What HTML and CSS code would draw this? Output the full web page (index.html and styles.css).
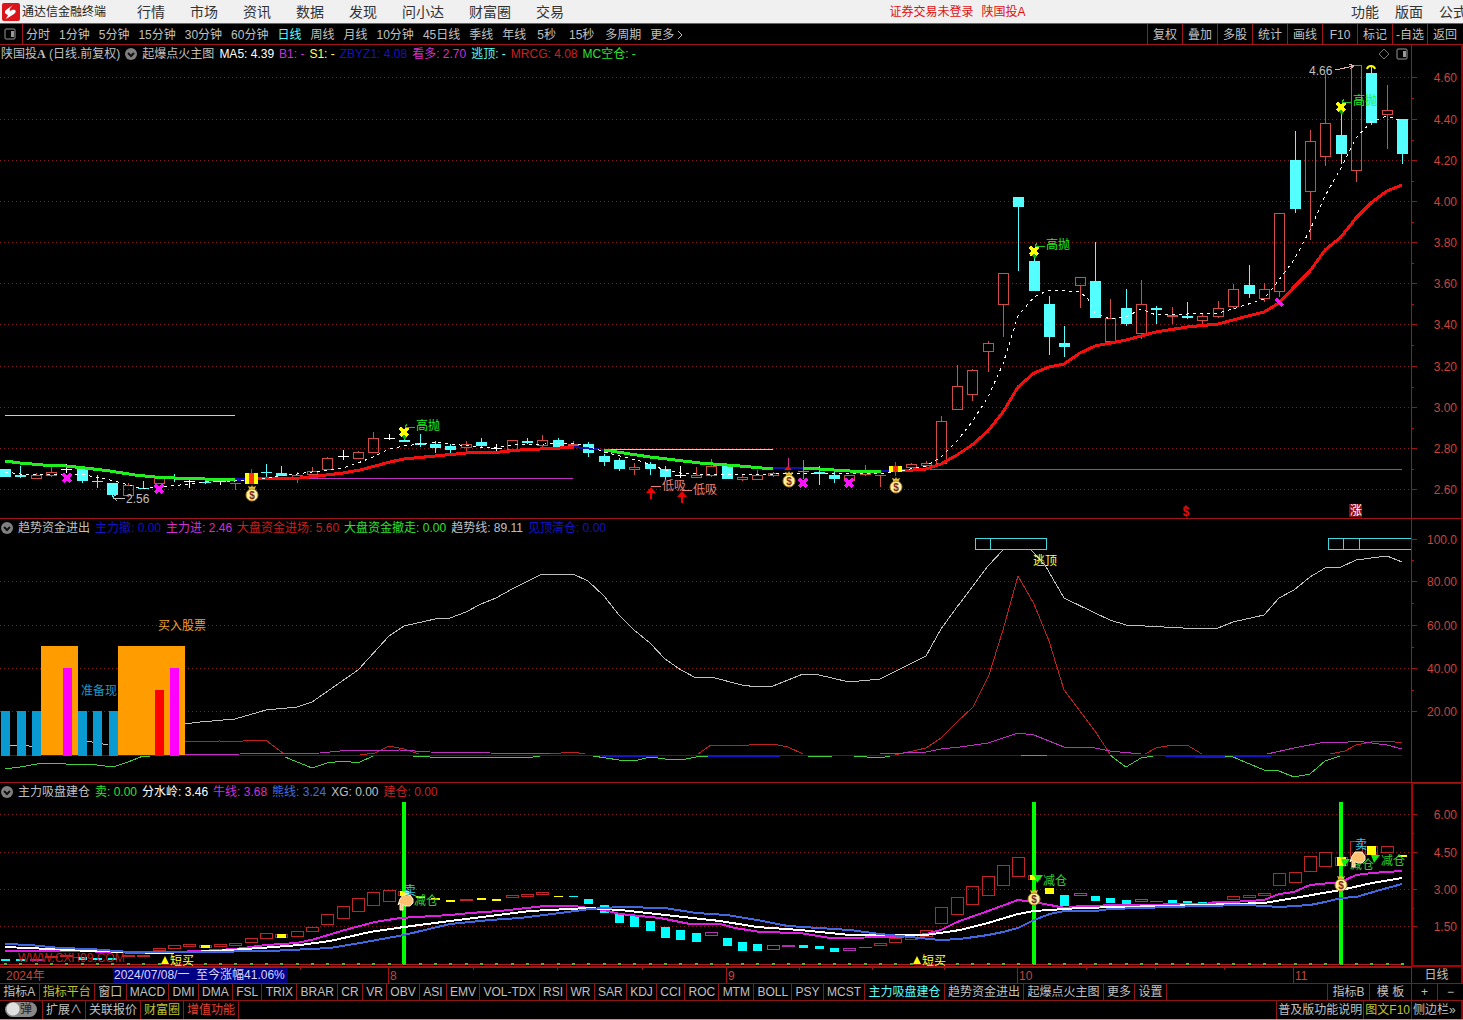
FILE: index.html
```html
<!DOCTYPE html>
<html lang="zh-CN">
<head>
<meta charset="utf-8">
<title>通达信金融终端</title>
<link rel="stylesheet" href="styles.css">
</head>
<body>
<header class="menubar">
  <svg class="logo" viewBox="0 0 18 18"><rect width="18" height="18" rx="2" fill="#d9151b"/><path d="M11 2 4 7c-2 2-1 4 2 5l-2 4 8-5c3-2 2-5-2-4L8 8c-1-1 0-3 3-6z" fill="#fff"/></svg>
  <span class="brand">通达信金融终端</span>
  <nav class="menus">
    <button>行情</button><button>市场</button><button>资讯</button><button>数据</button><button>发现</button><button>问小达</button><button>财富圈</button><button>交易</button>
  </nav>
  <p class="status"><span>证券交易未登录</span><span>陕国投A</span></p>
  <nav class="menus right"><button>功能</button><button>版面</button><button>公式</button></nav>
</header>

<div class="toolbar">
  <button class="pane" aria-label="侧栏"><svg viewBox="0 0 12 12" width="12" height="12"><rect x="1" y="1" width="10" height="10" rx="1" fill="none" stroke="#999"/><rect x="7" y="3" width="3" height="6" fill="#999"/></svg></button>
  <div class="periods">
    <button>分时</button><button>1分钟</button><button>5分钟</button><button>15分钟</button><button>30分钟</button><button>60分钟</button><button class="on">日线</button><button>周线</button><button>月线</button><button>10分钟</button><button>45日线</button><button>季线</button><button>年线</button><button class="sec">5秒</button><button class="sec">15秒</button><button>多周期</button><button>更多<svg class="chev" viewBox="0 0 6 10"><path d="M1 1l4 4-4 4" fill="none" stroke="#c0c0c0"/></svg></button>
  </div>
  <div class="tools">
    <button>复权</button><button>叠加</button><button>多股</button><button>统计</button><button>画线</button><button>F10</button><button>标记</button><button>-自选</button><button>返回</button>
  </div>
</div>

<main>
  <section class="panel">
    <div class="legend">
      <div class="vals">
        <span class="stock">陕国投<b>A</b> (日线.前复权)</span>
        <svg class="drop" viewBox="0 0 12 12"><circle cx="6" cy="6" r="6" fill="#808080"/><path d="M3 5l3 3 3-3" fill="none" stroke="#111" stroke-width="2"/></svg>
        <span>起爆点火主图</span><span class="white">MA5: 4.39</span><span class="mag">B1: -</span><span class="yel">S1: -</span><span class="navy">ZBYZ1: 4.08</span><span class="mag">看多: 2.70</span><span class="cyan">逃顶: -</span><span class="red">MRCG: 4.08</span><span class="green">MC空仓: -</span>
      </div>
      <svg class="corner" viewBox="0 0 30 12"><path d="M6 1l5 5-5 5-5-5z" fill="none" stroke="#777"/><rect x="19" y="1" width="10" height="10" rx="1" fill="none" stroke="#999"/><rect x="25" y="3" width="3" height="6" fill="#999"/></svg>
      <div class="scale"></div>
    </div>
    <svg class="chart" id="price" viewBox="0 63 1463 456"></svg>
  </section>

  <section class="panel">
    <div class="legend">
      <div class="vals">
        <svg class="drop" viewBox="0 0 12 12"><circle cx="6" cy="6" r="6" fill="#808080"/><path d="M3 5l3 3 3-3" fill="none" stroke="#111" stroke-width="2"/></svg>
        <span>趋势资金进出</span><span class="navy">主力撤: 0.00</span><span class="mag">主力进: 2.46</span><span class="red">大盘资金进场: 5.60</span><span class="green">大盘资金撤走: 0.00</span><span>趋势线: 89.11</span><span class="navy">见顶清仓: 0.00</span>
      </div>
      <div class="scale"></div>
    </div>
    <svg class="chart" id="trend" viewBox="0 537 1463 246"></svg>
  </section>

  <section class="panel active">
    <div class="legend">
      <div class="vals">
        <svg class="drop" viewBox="0 0 12 12"><circle cx="6" cy="6" r="6" fill="#808080"/><path d="M3 5l3 3 3-3" fill="none" stroke="#111" stroke-width="2"/></svg>
        <span>主力吸盘建仓</span><span class="green">卖: 0.00</span><span class="white">分水岭: 3.46</span><span class="mag">牛线: 3.68</span><span class="blue">熊线: 3.24</span><span>XG: 0.00</span><span class="red">建仓: 0.00</span>
      </div>
      <div class="scale"></div>
    </div>
    <svg class="chart" id="flow" viewBox="0 801 1463 166"></svg>
  </section>
</main>

<div class="timeline">
  <svg class="ticks" id="dates" viewBox="0 967 1411 16"></svg>
  <button>日线</button>
</div>

<div class="tabs">
  <div class="strip">
    <button>指标A</button><button class="olive">指标平台</button><button>窗口</button><button>MACD</button><button>DMI</button><button>DMA</button><button>FSL</button><button>TRIX</button><button>BRAR</button><button>CR</button><button>VR</button><button>OBV</button><button>ASI</button><button>EMV</button><button>VOL-TDX</button><button>RSI</button><button>WR</button><button>SAR</button><button>KDJ</button><button>CCI</button><button>ROC</button><button>MTM</button><button>BOLL</button><button>PSY</button><button>MCST</button><button class="on">主力吸盘建仓</button><button>趋势资金进出</button><button>起爆点火主图</button><button>更多</button><button>设置</button>
  </div>
  <div class="modes"><button>指标B</button><button>模 板</button><button class="zoom">+</button><button class="zoom">−</button></div>
</div>

<footer class="bottom">
  <label class="pop"><input type="checkbox"><span>弹</span></label>
  <button>扩展∧</button><button>关联报价</button><button class="olive">财富圈</button><button class="hot">增值功能</button>
  <div class="links"><a href="#">普及版功能说明</a><a href="#" class="olive">图文F10</a><a href="#">侧边栏»</a></div>
</footer>
<script src="chart.js"></script>
</body>
</html>
```
FILE: styles.css
```css
* { box-sizing: border-box; }
body {
  margin: 0;
  background: #000;
  color: #c0c0c0;
  font: 12px/16px "Liberation Sans", "Noto Sans CJK SC", sans-serif;
  overflow-x: hidden;
}
button, a {
  font: inherit;
  color: inherit;
  background: none;
  border: 0;
  margin: 0;
  padding: 0;
  white-space: nowrap;
  text-decoration: none;
}

.menubar {
  display: flex;
  align-items: center;
  height: 24px;
  background: #f0f0f0;
  border-bottom: 1px solid #666;
  color: #222;
  overflow: hidden;
}
.logo { width: 18px; height: 18px; margin: 0 2px; flex: none; }
.brand { white-space: nowrap; }
.menus { display: flex; gap: 25px; margin-left: 31px; font-size: 14px; color: #333; }
.menus.right { gap: 16px; margin: 0 -4px 0 auto; }
.status { display: flex; gap: 8px; margin: 0 0 0 auto; color: #e01010; white-space: nowrap; }

.toolbar { display: flex; height: 21px; border-bottom: 1px solid #a01414; overflow: hidden; }
.pane { display: flex; align-items: center; width: 23px; border-right: 1px solid #a01414; padding-left: 4px; }
.periods { display: flex; gap: 9px; padding: 1px 0 0 3px; }
.periods .sec { padding: 0 2px; }
.chev { width: 6px; height: 10px; margin-left: 3px; vertical-align: -1px; }
.tools { display: flex; margin-left: auto; padding-right: 1px; }
.tools button { width: 35px; border-left: 1px solid #a01414; padding-top: 1px; }
.on, .cyan { color: #54ffff; }

.legend { display: flex; align-items: center; height: 18px; }
.vals { display: flex; flex: 1; gap: 5px; align-items: center; white-space: nowrap; padding-left: 1px; }
.drop { width: 12px; height: 12px; flex: none; }
.stock b { font-family: "Liberation Serif", serif; }
.corner { width: 30px; height: 12px; margin-right: 3px; }
.scale { width: 52px; height: 100%; border: solid #a01414; border-width: 0 2px 0 1px; border-right-color: #900; }
.active .scale { border-left: 2px solid #a00; border-top: 1px solid #a00; border-right-color: #a00; }
.white { color: #fff; }
.mag { color: #d030d0; }
.yel { color: #ffff50; }
.navy { color: #1414c0; }
.red { color: #c82020; }
.green { color: #30e030; }
.blue { color: #4070e0; }
.chart { display: block; width: 100%; height: auto; overflow: visible; }
text { font-family: "Liberation Sans", "Noto Sans CJK SC", sans-serif; font-size: 12px; }

.timeline { display: flex; height: 16px; }
.ticks { flex: 1; min-width: 0; height: 16px; }
.timeline button { width: 52px; border-left: 1px solid #a01414; border-right: 2px solid #900; }

.tabs { display: flex; height: 17px; border-top: 1px solid #901414; overflow: hidden; }
.strip { display: flex; flex: 1; max-width: 1167px; min-width: 0; }
.strip button { flex: 1 1 auto; border-right: 1px solid #901414; padding: 0 2px; }
.modes { display: flex; margin-left: auto; }
.modes button { width: 42px; border-left: 1px solid #901414; }
.modes .zoom { width: 26px; }

.bottom { display: flex; height: 20px; border-top: 1px solid #901414; border-bottom: 1px solid #e08080; }
.bottom > button, .links a { border-right: 1px solid #901414; padding: 0 3px; line-height: 18px; }
.pop { position: relative; width: 43px; border-right: 1px solid #901414; padding: 1px 5px; }
.pop input { appearance: none; display: block; margin: 0; width: 32px; height: 15px; border-radius: 8px; background: radial-gradient(circle at 8px 7px, #e0e0e0 6px, #888 7px); }
.pop span { position: absolute; left: 20px; top: 0; color: #222; }
.links { display: flex; margin-left: auto; border-left: 1px solid #901414; }
.links a { padding: 0 1px; }
.links a:last-child { width: 51px; border-right: 2px solid #900; }
.olive { color: #c0c030; }
.hot { color: #e04030; }
```
FILE: chart.js
```js
// Each chart shares one time scale: bar k sits at X(k).
const X = k => Math.round(5 + 15.352 * k);
const UP = '#d04c44', DOWN = '#54ffff', AXIS = '#a01414', LABEL = '#c8443c';

const rect = (x, y, w, h, fill) => `<rect x="${x}" y="${y}" width="${w}" height="${h}" fill="${fill}" shape-rendering="crispEdges"/>`;
const box = (x, y, w, h, c) =>
  rect(x, y, w, 1, c) + rect(x, y + h - 1, w, 1, c) + rect(x, y, 1, h, c) + rect(x + w - 1, y, 1, h, c);
const line = (pts, c, w = 1, extra = '') => `<polyline points="${pts}" fill="none" stroke="${c}" stroke-width="${w}" shape-rendering="crispEdges" ${extra}/>`;
const text = (x, y, s, c, extra = '') => `<text x="${x}" y="${y}" fill="${c}" ${extra}>${s}</text>`;
const cross = (x, y, c) => line(`${x - 4},${y - 4} ${x + 4},${y + 4}`, c, 3) + line(`${x - 4},${y + 4} ${x + 4},${y - 4}`, c, 3);
const bag = (x, y) => `<g><path d="M${x - 4} ${y - 8}l3 1 1-2 1 2 3-1-2 5h-4z" fill="#e8c030"/><circle cx="${x}" cy="${y + 1}" r="6" fill="#fff0a0" stroke="#b08820"/><text x="${x}" y="${y + 5}" style="font-size:10px;font-weight:bold" text-anchor="middle" fill="#802810">$</text></g>`;
const hand = (x, y) => `<path d="M${x - 5} ${y - 2}l3-4h7l3 4v4l-3 3h-5l-2-2v6h-3v-7l-2 2z" fill="#ffc070" stroke="#fff0d0"/>`;
const frame = (top, bottom) => rect(1411, top, 1, bottom - top, AXIS) + rect(1461, top, 2, bottom - top, '#990000') + rect(0, bottom - 1, 1463, 1, AXIS);

function scale(levels, skipFirst) {
  return levels.map(([y, s], i) =>
    (i || !skipFirst ? line(`0,${y} 1411,${y}`, '#8c1c1c', 1, 'stroke-dasharray="1 3"') : '') +
    rect(1412, y, 5, 1, AXIS) + text(1457, y + 5, s, LABEL, 'text-anchor="end"') +
    (i < levels.length - 1 ? rect(1412, Math.round((y + levels[i + 1][0]) / 2), 2, 1, AXIS) : '')).join('');
}

// type, high, body top, body bottom, low
const bars = `c 469 469 477 477,c 466 475 477 478,r 473 475 479 479,r 467 472 476 477,w 464 469 470 473,c 468 469 481 483,c 475 481 482 488,c 483 483 495 497,r 483 485 496 497,c 481 488 489 489,r 478 478 484 484,c 474 477 478 482,w 478 481 482 488,c 478 482 483 484,w 479 481 482 485,r 483 483 484 490,n,c 464 472 473 477,c 466 473 476 476,r 472 475 479 483,r 467 471 475 476,r 457 458 470 470,w 450 456 457 460,r 451 452 459 459,r 432 438 453 453,w 434 438 439 440,c 438 440 442 442,c 434 443 445 447,c 441 444 448 453,c 444 446 450 454,r 441 444 448 452,c 438 442 446 447,w 444 448 449 451,r 440 440 450 450,c 438 441 443 444,r 435 440 446 447,c 438 440 447 447,r 441 444 446 449,c 442 444 453 457,c 454 456 462 466,c 458 460 469 471,r 463 467 470 475,c 462 464 469 475,c 466 469 477 480,w 466 475 476 478,r 467 475 478 478,r 459 466 476 477,c 466 466 479 479,r 475 477 480 481,r 470 475 480 480,r 472 473 476 477,m 458 470 470 470,g 460 471 472 479,c 466 472 474 485,c 472 475 479 483,r 475 475 481 481,r 465 472 475 476,r 475 475 476 487,n,r 463 464 468 472,r 461 463 466 467,r 416 421 464 464,r 365 386 410 410,r 369 370 395 401,r 341 343 352 372,r 273 273 305 337,c 197 197 207 271,c 257 261 291 291,c 296 304 337 355,c 326 343 347 357,r 277 277 286 308,c 242 281 318 318,r 299 318 342 342,c 289 308 324 326,r 280 304 334 339,c 306 308 310 324,r 307 315 317 324,c 302 316 318 319,r 313 316 321 324,r 301 308 317 318,r 284 289 307 309,c 265 285 294 298,r 283 289 299 302,r 213 213 292 297,c 131 160 209 213,r 130 141 192 240,r 74 123 157 166,c 112 135 154 164,r 65 65 171 182,c 65 73 123 125,r 85 110 115 149,c 119 119 154 164`.split(',');

let p = scale([[77, '4.60'], [119, '4.40'], [160, '4.20'], [201, '4.00'], [242, '3.80'], [283, '3.60'], [324, '3.40'], [366, '3.20'], [407, '3.00'], [448, '2.80'], [489, '2.60']]) + frame(63, 519);
p += rect(5, 415, 230, 1, DOWN) + rect(604, 449, 169, 1, DOWN) + rect(305, 478, 268, 1, '#c030c0') + rect(930, 469, 472, 1, '#c030c0');
bars.forEach((s, k) => {
  const [t, ...v] = s.split(' '), [hi, a, b, lo] = v.map(Number), x = X(k);
  if (t === 'n') return;
  const c = { c: DOWN, r: UP, w: '#fff', m: '#d030a0', g: '#30c050' }[t];
  if (t === 'r') p += rect(x, hi, 1, a - hi, c) + rect(x, b, 1, lo - b, c) + box(x - 5, a, 11, Math.max(b - a, 1), c);
  else p += rect(x, hi, 1, lo - hi, c) + rect(x - 5, a, 11, b - a, c);
});
const RED = '#f01010', GREEN = '#20f020', BLUE = '#1010b0';
p += line('257,479 300,478 318,476 343,473 360,470 390,462 404,459 435,456 466,453 500,452 520,450 560,448 574,447', RED, 3);
p += line('5,461 20,463 43,465 66,466 85,468 110,471 135,475 155,477 175,478 235,480', GREEN, 3);
p += line('235,479 245,479', BLUE, 3) + line('574,447 604,450', BLUE, 2) + line('773,468 803,468', BLUE, 2) + line('881,471 890,471', BLUE, 2);
p += line('604,450 650,457 700,463 740,466 773,469', GREEN, 3) + line('803,468 850,471 881,472', GREEN, 3);
p += line('900,471 926,469 941,464 957,455 972,445 988,431 1003,412 1018,387 1034,373 1049,367 1064,364 1080,353 1095,346 1126,340 1156,332 1187,327 1218,324 1248,316 1264,312 1279,303 1294,287 1310,271 1325,250 1341,237 1356,218 1371,203 1387,191 1402,185', RED, 3);
p += line('5,472 20,474 50,474 85,475 100,478 115,481 128,485 143,489 158,487 180,485 205,482 235,481 251,480 297,474 312,472 343,468 358,463 373,457 389,449 404,446 435,442 450,444 490,448 512,445 545,444 573,443 588,446 604,452 620,456 640,461 665,470 681,473 711,475 773,474 803,473 881,474 895,472 926,466 941,457 957,441 972,422 988,397 1003,364 1018,316 1034,297 1049,290 1080,292 1088,299 1095,313 1110,319 1126,317 1141,309 1156,315 1187,314 1218,313 1233,309 1264,299 1279,280 1294,260 1310,230 1325,196 1341,168 1356,138 1371,122 1387,116 1402,121', '#fff', 1, 'stroke-dasharray="3 4"');
for (const [x, y, h] of [[245, 473, 11], [889, 466, 6]]) p += rect(x, y, 13, h, '#ffff00') + rect(x + 4, y, 5, h, '#ff3010');
p += rect(251, 469, 1, 4, '#c03060') + rect(895, 462, 1, 14, '#c03060') + '<path d="M784 470l4-4 4 4z" fill="#f01010"/>';
for (const [x, y] of [[67, 478], [159, 489], [803, 483], [849, 483]]) p += cross(x, y, '#ff10ff');
p += line('1276,299 1283,306', '#ff10ff', 3);
for (const [x, y] of [[252, 494], [789, 480], [896, 486]]) p += bag(x, y);
for (const [x, y] of [[404, 432], [1034, 251], [1341, 107]])
  p += `<path d="M${x - 3} ${y + 3}h7l-3 5z" fill="#10b010"/>` + cross(x, y, '#ffff00') + line(`${x + 1},${y - 5} ${x + 11},${y - 5}`, '#20c020') + line(`${x + 3},${y - 8} ${x + 1},${y - 5}`, '#20c020') + text(x + 12, y - 2, '高抛', GREEN);
for (const [x, y] of [[651, 487], [682, 491]])
  p += `<path d="M${x - 5} ${y + 6}l5-6 5 6h-4v6h-2v-6z" fill="#f00000"/>` + line(`${x},${y - 1} ${x + 10},${y - 1}`, '#e88078') + text(x + 11, y + 3, '低吸', '#e88078');
p += line('117,494 113,497 117,501', '#c0c0c0') + line('113,498 125,498', '#c0c0c0') + text(126, 503, '2.56', '#c0c0c0');
p += text(1309, 75, '4.66', '#c0c0c0') + line('1335,70 1354,66', '#e0b0b0') + line('1349,64 1354,66 1350,69', '#e0b0b0');
p += '<path d="M1367 69c1-4 7-4 8 0" fill="none" stroke="#ff0" stroke-width="2"/>' + text(1186, 516, '$', '#e01010', 'text-anchor="middle" style="font-weight:bold"') + '<path d="M1183 508l3-3 3 3z" fill="#c01010"/>';
p += rect(1349, 504, 13, 13, '#8c0c0c') + text(1350, 515, '涨', '#fff');
document.getElementById('price').innerHTML = p;

let t = scale([[539, '100.0'], [581, '80.00'], [625, '60.00'], [668, '40.00'], [711, '20.00']], true) + frame(537, 783);
const G = '#c0c0c0', R = '#c02020', M = '#c030c0', N = '#1414c8', E = '#40d040';
t += line('5,745 22,745 35,747', G) + line('87,741 108,745', G);
t += line('185,724 200,722 235,719 266,710 297,707 312,702 358,670 389,636 404,626 435,619 450,618 466,612 481,604 496,598 512,589 542,574 573,574 588,581 604,596 619,615 634,630 650,643 665,659 681,670 696,678 711,677 742,685 757,687 773,686 803,674 819,675 849,682 880,679 926,656 941,629 957,607 973,586 988,566 1003,550', G);
t += line('1031,550 1045,565 1064,598 1095,613 1110,620 1126,625 1202,629 1218,628 1233,622 1264,615 1279,598 1294,590 1310,577 1325,568 1341,567 1356,560 1387,556 1402,562', G);
t += rect(5, 755, 1397, 1, N) + rect(602, 755, 56, 2, N) + rect(708, 755, 72, 2, N) + rect(1165, 756, 106, 1, N) + rect(1195, 757, 32, 1, N) + rect(1021, 755, 26, 1, '#30b080');
t += line('5,769 20,767 43,763 66,764 97,765 113,767 128,762 143,756 150,756', E) + line('285,757 312,768 327,763 343,761 358,763 373,756', E) + line('413,756 430,757 510,757 527,758 540,756', E) + line('593,756 619,760 638,760 650,757 665,759 681,760 696,757 708,756', E) + line('808,756 820,757 832,756', E) + line('854,756 880,758 890,756', E) + line('1110,755 1126,767 1141,758 1153,756', E) + line('1225,756 1233,757 1264,770 1279,771 1294,777 1310,774 1325,761 1340,756', E);
t += line('185,742 220,741 235,742 251,740 267,741 283,753 295,754', R) + line('360,755 375,753 389,746 404,749 419,754', R) + line('550,754 573,752 585,754', R) + line('698,754 711,745 742,746 757,744 773,744 788,747 803,754', R);
t += line('895,755 926,748 941,738 957,722 973,707 989,675 1003,630 1018,576 1034,604 1049,641 1064,690 1095,731 1110,754', R) + line('1145,754 1156,748 1172,745 1187,745 1202,754', R) + line('1330,754 1345,751 1356,745 1371,742 1387,741 1402,743', R);
t += line('185,755 240,754 320,753 340,751 400,750 430,752 490,753 550,754 565,754', M) + line('880,754 926,752 941,749 960,747 988,743 1003,738 1018,733 1034,735 1064,747 1095,748 1110,751 1141,754', M) + line('1267,754 1294,748 1325,742 1341,743 1356,741 1387,745 1402,749', M);
t += rect(41, 646, 37, 109, '#ff9c00') + rect(118, 646, 67, 109, '#ff9c00');
for (const x of [1, 17, 32, 78, 93, 109]) t += rect(x, 711, 9, 45, '#089ad0');
t += rect(63, 668, 9, 88, '#ff00ff') + rect(170, 668, 9, 88, '#ff00ff') + rect(155, 690, 9, 66, '#ff0000');
t += text(81, 695, '准备现', '#189ac8') + text(158, 630, '买入股票', '#f0a030') + text(1033, 565, '逃顶', '#ffff40');
t += box(975, 538, 72, 12, '#40d8e0') + rect(990, 538, 1, 12, '#40d8e0') + rect(1328, 538, 83, 1, '#40d8e0') + rect(1328, 549, 83, 1, '#40d8e0');
for (const x of [1328, 1343, 1359]) t += rect(x, 538, 1, 12, '#40d8e0');
document.getElementById('trend').innerHTML = t;

// bar index, type, top, bottom
const flow = `0 c 959 961,1 c 959 961,5 c 957 960,6 c 958 960,7 c 958 960,2 m 959 961,3 r 956 958,4 r 955 957,8 r 955 957,9 r 955 957,10 r 948 951,11 r 945 949,12 r 944 947,13 y 945 948,14 r 944 947,15 r 943 946,16 r 938 943,17 r 933 939,18 y 934 938,19 r 931 937,20 r 927 932,21 r 914 925,22 r 906 919,23 r 898 912,24 r 892 906,25 r 890 902,26 y 891 896,27 y 896 898,28 y 898 900,29 y 900 902,30 r 899 901,31 y 898 900,32 y 899 901,33 r 895 898,34 r 894 897,35 r 892 895,36 y 896 897,37 c 896 897,38 c 899 904,39 c 905 913,40 c 913 923,41 c 916 927,42 c 921 931,43 c 927 938,44 c 930 940,45 c 933 942,46 m 932 936,47 c 938 946,48 c 942 951,49 c 944 951,50 m 945 950,51 m 945 947,52 c 945 948,53 c 946 949,54 c 948 952,55 m 948 951,56 m 947 948,57 r 943 946,58 r 938 943,59 r 935 940,60 r 930 937,61 r 907 924,62 r 897 915,63 r 886 905,64 r 876 896,65 r 865 886,66 r 857 877,67 y 875 880,68 y 888 894,69 c 895 906,70 m 893 896,71 c 896 901,72 c 898 903,73 c 900 905,74 m 899 902,75 m 901 902,76 c 900 903,77 c 901 904,78 c 902 904,79 m 901 902,80 r 896 900,81 r 895 898,82 r 893 896,83 r 873 886,84 r 872 883,85 r 856 872,86 r 852 867,87 y 857 866,88 r 841 858,89 y 846 855,90 r 846 853,91 y 855 857`.split(',');
let f = scale([[814, '6.00'], [852, '4.50'], [889, '3.00'], [926, '1.50']]) + frame(801, 967);
f += rect(1411, 801, 2, 166, '#aa0000') + rect(1411, 965, 52, 2, '#aa0000') + rect(0, 964, 1402, 1, '#b02020');
for (let k = 0; k < 92; k++) f += rect(X(k) - 1, 963, 3, 2, k === 91 ? '#20e020' : '#60b020');
for (const x of [404, 1034, 1341]) f += rect(x - 2, 802, 4, 162, '#00ff00');
for (const s of flow) {
  const [k, c, a, b] = s.split(' '), x = X(+k), y = +a, h = b - a;
  if (c === 'c') f += rect(x - 4, y, 9, h, '#00ffff');
  else if (c === 'y') f += (h > 2 && k !== '68' ? box(x - 6, y, 13, h, '#b02020') : '') + rect(x - 4, y, 9, h, '#ffff00');
  else f += box(x - 6, y, 13, h, c === 'r' ? '#c02424' : '#b030b0');
}
f += line('5,951 90,951 100,952 150,953 200,951 235,949 266,945 297,943 315,939 345,930 375,922 400,918 450,915 470,913 500,911 545,906 575,906 588,908 604,910 620,914 660,918 690,924 720,924 735,928 760,932 800,933 830,938 900,937 926,934 941,930 957,922 988,911 1018,900 1034,902 1050,905 1065,908 1080,906 1126,905 1200,904 1264,900 1279,894 1294,892 1310,885 1341,882 1356,875 1372,873 1402,871', '#e020e0', 2);
f += line('5,947 50,949 90,951 130,952 160,953 215,951 260,948 300,945 330,941 370,932 404,927 450,921 490,916 530,911 588,908 620,910 665,915 720,921 757,927 800,930 850,935 926,935 960,930 988,923 1018,914 1034,911 1080,908 1200,905 1264,903 1294,898 1341,890 1372,883 1402,878', '#fff', 2);
f += line('5,944 30,945 60,948 90,949 130,952 200,952 270,951 330,948 360,943 404,935 450,924 490,920 520,918 560,913 590,909 620,907 665,908 696,913 727,915 757,920 788,926 850,930 880,934 910,937 940,940 960,939 988,935 1003,932 1018,928 1034,920 1050,914 1064,911 1095,911 1110,909 1200,906 1248,905 1280,907 1310,905 1325,902 1341,898 1356,897 1380,890 1402,884', '#4068e0', 2);
f += text(18, 962, 'WWW.CXH99.COM', '#c01c1c');
for (const x of [165, 917]) f += `<path d="M${x - 4} 964l4-8 4 8z" fill="#ff0"/>` + text(x + 5, 965, '短买', '#ffff40');
for (const [x, y] of [[1037, 875], [1344, 859], [1374, 855]]) f += `<path d="M${x - 3} ${y}h9l-6 8z" fill="#10f010"/>`;
for (const [x, y] of [[414, 905], [1043, 885], [1350, 869], [1381, 865]]) f += text(x, y, '减仓', '#30d030');
f += hand(405, 901) + hand(1357, 858) + text(404, 895, '卖', '#30c8e0') + text(1355, 849, '卖', '#30c8e0') + bag(1034, 898) + bag(1341, 884);
document.getElementById('flow').innerHTML = f;

let d = rect(0, 967, 1411, 1, AXIS) + text(6, 980, '2024年', LABEL);
d += rect(113, 968, 175, 15, '#000084') + text(114, 979, '2024/07/08/一&nbsp; 至今涨幅41.06%', '#d8d8ff');
for (const [x, s] of [[388, '8'], [726, '9'], [1017, '10'], [1293, '11']]) d += rect(x, 967, 1, 16, AXIS) + text(x + 2, 980, s, LABEL);
for (const x of [300, 473, 557, 642, 799, 872, 944, 1086, 1155, 1224]) d += rect(x, 968, 1, 2, AXIS);
document.getElementById('dates').innerHTML = d;
```
